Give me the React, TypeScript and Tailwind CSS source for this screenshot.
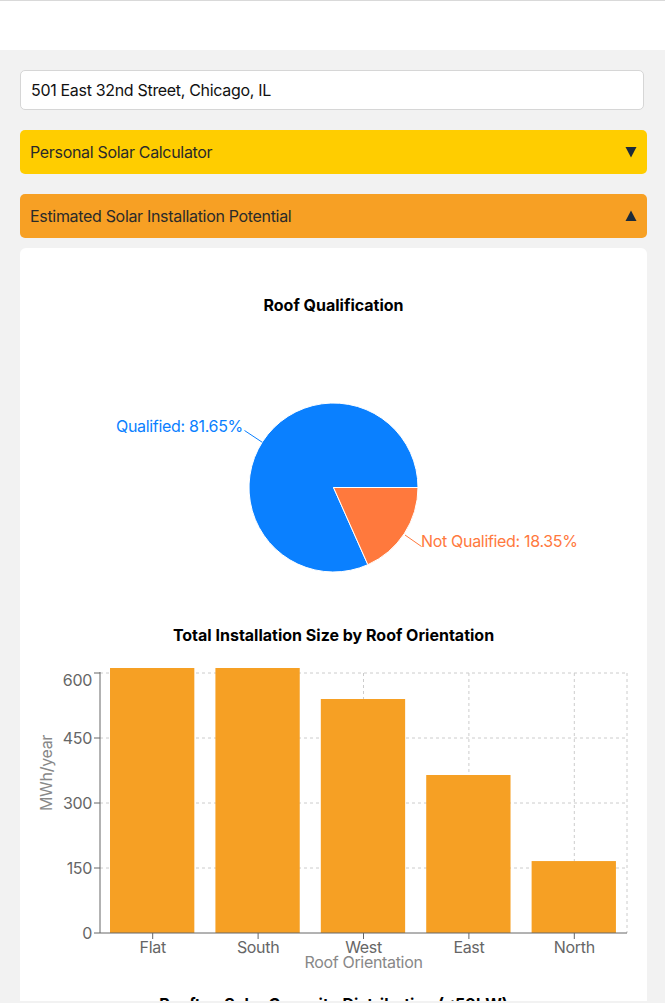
import React from "react";

const FONT = { fontFamily: "Inter, 'Liberation Sans', sans-serif" };
const SVGFONT = { fontFamily: "Inter, 'Liberation Sans', sans-serif", letterSpacing: "-0.02em" };

function Arrow({ up }: { up?: boolean }) {
  return (
    <svg width={20} height={12} viewBox="0 0 20 12" className="block">
      <polygon points={up ? "10,0.5 15.5,11 4.5,11" : "4.5,1 15.5,1 10,11.5"} fill="#1d2b3a" />
    </svg>
  );
}

function PieChart() {
  const cx = 333.5, cy = 487.5, r = 84.5;
  const a = (294 * Math.PI) / 180;
  const ex = cx + r * Math.cos(a);
  const ey = cy - r * Math.sin(a);
  return (
    <svg width={627} height={300} viewBox="20 315 627 300" className="block">
      <path d={`M${cx} ${cy} L${cx + r} ${cy} A${r} ${r} 0 1 0 ${ex} ${ey} Z`} fill="#0a80ff" stroke="#fff" strokeWidth={1} />
      <path d={`M${cx} ${cy} L${ex} ${ey} A${r} ${r} 0 0 0 ${cx + r} ${cy} Z`} fill="#ff793d" stroke="#fff" strokeWidth={1} />
      <polyline points="262.3,442.3 244.5,430.5" fill="none" stroke="#0a80ff" strokeWidth={1} />
      <text x={243} y={426} textAnchor="end" dominantBaseline="central" fill="#0a80ff" fontSize={16} style={SVGFONT}>
        Qualified: 81.65%
      </text>
      <polyline points="405,535 421.5,546.5" fill="none" stroke="#ff793d" strokeWidth={1} />
      <text x={421} y={541} textAnchor="start" dominantBaseline="central" fill="#ff793d" fontSize={16} style={SVGFONT}>
        Not Qualified: 18.35%
      </text>
    </svg>
  );
}

function BarChart() {
  const left = 100, right = 627, top = 673, bottom = 933;
  const band = (right - left) / 5;
  const data = [
    { name: "Flat", v: 620 },
    { name: "South", v: 620 },
    { name: "West", v: 540 },
    { name: "East", v: 364.6 },
    { name: "North", v: 166 },
  ];
  const yOf = (v: number) => bottom - (v / 150) * 65;
  const ticks = [0, 150, 300, 450, 600];
  return (
    <svg width={627} height={340} viewBox="20 645 627 340" className="block">
      {ticks.slice(1).map((t) => (
        <line key={t} x1={left} x2={right} y1={yOf(t)} y2={yOf(t)} stroke="#cccccc" strokeDasharray="3 3" />
      ))}
      {data.map((d, i) => (
        <line key={d.name} x1={left + band * (i + 0.5)} x2={left + band * (i + 0.5)} y1={top} y2={bottom} stroke="#cccccc" strokeDasharray="3 3" />
      ))}
      <line x1={right} x2={right} y1={top} y2={bottom} stroke="#cccccc" strokeDasharray="3 3" />
      {data.map((d, i) => {
        const x = left + band * i + band * 0.095;
        const y = Math.max(yOf(d.v), 668);
        return <rect key={d.name} x={x} y={y} width={band * 0.8} height={bottom - y} fill="#f6a024" />;
      })}
      <line x1={left} x2={left} y1={672} y2={bottom} stroke="#666" />
      <line x1={left} x2={right} y1={bottom} y2={bottom} stroke="#666" />
      {ticks.map((t) => (
        <g key={t}>
          <line x1={94} x2={left} y1={yOf(t)} y2={yOf(t)} stroke="#666" />
          <text x={92} y={t === 600 ? 680 : yOf(t)} textAnchor="end" dominantBaseline="central" fill="#666" fontSize={16} style={SVGFONT}>
            {t}
          </text>
        </g>
      ))}
      {data.map((d, i) => {
        const x = left + band * (i + 0.5);
        return (
          <g key={d.name}>
            <line x1={x} x2={x} y1={bottom} y2={bottom + 6} stroke="#666" />
            <text x={x} y={947} textAnchor="middle" dominantBaseline="central" fill="#666" fontSize={16} style={SVGFONT}>
              {d.name}
            </text>
          </g>
        );
      })}
      <text x={363.5} y={962} textAnchor="middle" dominantBaseline="central" fill="#888" fontSize={16} style={SVGFONT}>
        Roof Orientation
      </text>
      <text x={46} y={773} textAnchor="middle" dominantBaseline="central" fill="#888" fontSize={16} transform="rotate(-90 46 773)" style={SVGFONT}>
        MWh/year
      </text>
    </svg>
  );
}

export default function App() {
  return (
    <div className="min-h-screen bg-[#f2f2f2]" style={FONT}>
      <div className="h-[50px] bg-white border-t border-[#d9d9d9]" />
      <div className="pl-5 pr-[18px] pt-5 flex flex-col">
        <div className="mr-[3px] h-10 bg-white border border-[#d6d6d6] rounded-[5px] flex items-center px-[10px] text-[16px] tracking-[-0.02em] text-[#111]">
          501 East 32nd Street, Chicago, IL
        </div>
        <div className="mt-5 h-11 bg-[#ffcd00] rounded-[5px] flex items-center justify-between pl-[10px] pr-[6px] text-[16px] tracking-[-0.02em] text-[#2a2a2a]">
          <span>Personal Solar Calculator</span>
          <Arrow />
        </div>
        <div className="mt-5 h-11 bg-[#f7a024] rounded-[5px] flex items-center justify-between pl-[10px] pr-[6px] text-[16px] tracking-[-0.02em] text-[#2a2a2a]">
          <span>Estimated Solar Installation Potential</span>
          <Arrow up />
        </div>
        <div className="mt-[10px] bg-white rounded-[6px] pt-[47px] pb-10 flex flex-col items-center">
          <h3 className="h-5 leading-5 text-[16px] font-bold text-black">Roof Qualification</h3>
          <PieChart />
          <h3 className="mt-[10px] h-5 leading-5 text-[16px] font-bold text-black">Total Installation Size by Roof Orientation</h3>
          <BarChart />
          <h3 className="mt-[9px] h-5 leading-5 text-[16px] font-bold text-black">Rooftop Solar Capacity Distribution (&lt;50kW)</h3>
          <div className="h-[300px]" />
        </div>
      </div>
      <div className="fixed bottom-0 left-0 right-0 h-[2px] bg-[#f2f2f2]" />
    </div>
  );
}
